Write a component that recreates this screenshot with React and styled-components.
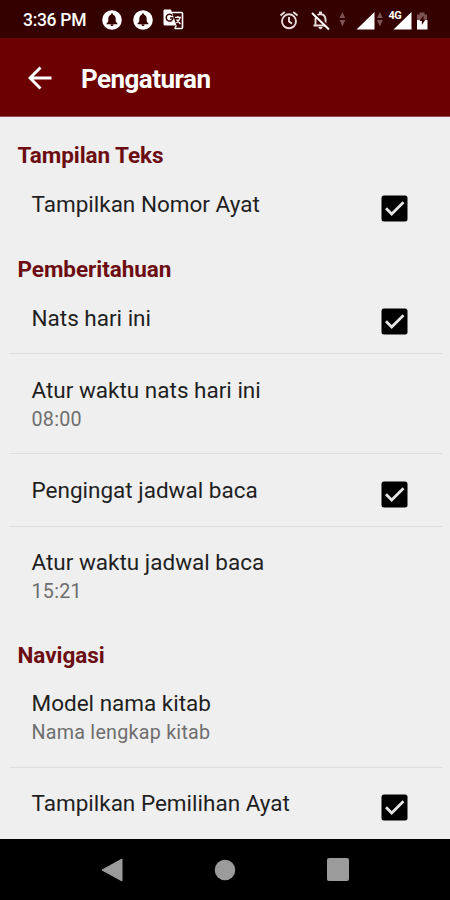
import React from 'react';
import styled, { createGlobalStyle } from 'styled-components';

const GlobalStyle = createGlobalStyle`
    * {
        box-sizing: border-box;
    }

    body {
        margin: 0;
        background-color: #efefef;
        font-family: Roboto, "Liberation Sans", sans-serif;
    }
`;

const Screen = styled.div`
    display: flex;
    flex-direction: column;
    width: 450px;
    height: 900px;
    overflow: hidden;
    background-color: #efefef;
`;

const StatusBar = styled.div`
    display: flex;
    align-items: center;
    flex: none;
    height: 38px;
    padding: 1px 22px 0 23px;
    background-color: #350000;
    color: #fff;
`;

const Clock = styled.span`
    width: 79px;
    font-size: 17.5px;
    font-weight: 500;
    letter-spacing: -0.3px;
    white-space: nowrap;
`;

const Notifications = styled.div`
    display: flex;
    align-items: center;
    gap: 10.5px;
`;

const SystemIcons = styled.svg`
    display: block;
    margin-left: auto;
`;

const Header = styled.header`
    display: flex;
    align-items: center;
    flex: none;
    height: 79px;
    padding: 1px 0 0 28px;
    border-bottom: 1px solid #8f4a4a;
    background-color: #6c0000;
`;

const Title = styled.h1`
    margin: 2px 0 0 29px;
    font-size: 26px;
    font-weight: 700;
    letter-spacing: -0.55px;
    color: #fff;
`;

const List = styled.main`
    flex: 1;
    min-height: 0;
    overflow: hidden;
    padding-top: 10.4px;
`;

const SectionTitle = styled.h2`
    height: 41px;
    margin: 0;
    padding: 15px 17.5px 0;
    font-size: 22.5px;
    font-weight: 700;
    line-height: 26px;
    letter-spacing: -0.05px;
    color: #6c0d12;
`;

const Row = styled.div`
    display: flex;
    align-items: center;
    justify-content: space-between;
    height: ${(props) => (props.$tall ? 99.9 : 72.5)}px;
    margin: 0 8px 0 9px;
    padding: 0 34.5px 0 22.5px;
    border-bottom: 1px solid ${(props) => (props.$last ? 'transparent' : '#dedede')};
`;

const Label = styled.div`
    font-size: 22.5px;
    line-height: 28px;
    color: #1f1f1f;
`;

const Summary = styled.div`
    padding-top: 1px;
    font-size: 19.7px;
    line-height: 29px;
    letter-spacing: 0.25px;
    color: #6e6e6e;
`;

const Texts = styled.div`
    padding-top: ${(props) => (props.$tall ? 1.6 : 0)}px;
`;

const CheckBox = styled.svg`
    display: block;
    margin-top: 8px;
`;

const NavBar = styled.nav`
    display: flex;
    justify-content: center;
    align-items: center;
    gap: 91px;
    flex: none;
    height: 61px;
    background-color: #000;
`;

const sections = [
    {
        title: 'Tampilan Teks',
        rows: [{ label: 'Tampilkan Nomor Ayat', checked: true }],
    },
    {
        title: 'Pemberitahuan',
        rows: [
            { label: 'Nats hari ini', checked: true },
            { label: 'Atur waktu nats hari ini', summary: '08:00' },
            { label: 'Pengingat jadwal baca', checked: true },
            { label: 'Atur waktu jadwal baca', summary: '15:21' },
        ],
    },
    {
        title: 'Navigasi',
        rows: [
            { label: 'Model nama kitab', summary: 'Nama lengkap kitab' },
            { label: 'Tampilkan Pemilihan Ayat', checked: true },
        ],
    },
];

function BellBadge() {
    return (
        <svg width="20" height="20" viewBox="0 0 20 20">
            <circle cx="10" cy="10" r="9.8" fill="#fff" />
            <path d="M10 3.500c-.8 0-1.200.5-1.200 1.200C6.900 5.400 6.300 7 6.300 9v2.600L4.600 13.400v.9h10.800v-.9l-1.700-1.800V9c0-2-.6-3.600-2.500-4.300 0-.7-.4-1.200-1.200-1.200zM8.500 14.500h3c0 1-.6 1.500-1.500 1.500s-1.500-.5-1.500-1.500z" fill="#350000" />
        </svg>
    );
}

function TranslateIcon() {
    return (
        <svg width="21" height="21" viewBox="0 0 21 21">
            <path d="M9 3.500h9.500a1 1 0 0 1 1 1V18.500a1 1 0 0 1-1 1H12" fill="none" stroke="#fff" strokeWidth="1.600" />
            <path d="M1.500.5H8L13.500 16.500H2a1.500 1.500 0 0 1-1.500-1.500V1.500a1 1 0 0 1 1-1z" fill="#fff" />
            <path d="M9.300 6.600A3.400 3.400 0 1 0 10 9H7" fill="none" stroke="#350000" strokeWidth="1.500" />
            <path d="M12 8.300h6M14.800 7v1.300M17 8.500c-.6 2.500-2 4-3.500 5.500M13.500 10.500l4 4.500M11.500 19.500l2-3" fill="none" stroke="#fff" strokeWidth="1.300" />
        </svg>
    );
}

function StatusIcons() {
    return (
        <SystemIcons width="150" height="24" viewBox="278 7 150 24">
            <g fill="none" stroke="#e8dcdc" strokeWidth="1.900">
                <circle cx="289" cy="20.300" r="7" />
                <path d="M289 16v4.600l3 2M280.500 14.500l4.200-3.500M297.500 14.500l-4.200-3.500" />
                <path d="M313.500 24.500h14.500M315.500 24.500v-6c0-3 1.800-5.100 5-5.500 3.200.4 5 2.500 5 5.500v6" />
                <path d="M313.500 11.500l17 16" stroke="#350000" strokeWidth="2" />
                <path d="M312 12l17 16.500" stroke="#fff" strokeWidth="2" />
            </g>
            <path d="M319 10.500h3v2.500h-3zM318.500 26h4c0 1.300-.8 2.200-2 2.200s-2-.9-2-2.200z" fill="#e8dcdc" />
            <path d="M339.500 17l2.900-6 2.900 6zM339.500 19h5.800l-2.900 6.500zM377 17l2.900-6 2.900 6zM377 19h5.800l-2.900 6.500z" fill="#7d5353" />
            <path d="M374.500 11v17.500H356.500zM411.500 11v17.500H393.500z" fill="#fff" />
            <text x="388.500" y="18" fontSize="11" fontWeight="700" fill="#fff" stroke="#350000" strokeWidth="1.500" paintOrder="stroke" letterSpacing="-0.5">4G</text>
            <path d="M417 19v-5.500h2.500V11.500h5v2h2.500V19z" fill="#7d5353" />
            <path d="M417 19h10.500v9.500H417z" fill="#fff" />
            <path d="M423.500 14.500l-4 5.500h2.400v4l3.600-5.500h-2z" fill="#350000" />
        </SystemIcons>
    );
}

function SettingRow({ row, last }) {
    return (
        <Row $tall={!!row.summary} $last={last}>
            <Texts $tall={!!row.summary}>
                <Label>{row.label}</Label>
                {row.summary && <Summary>{row.summary}</Summary>}
            </Texts>
            {row.checked && (
                <CheckBox width="27" height="27" viewBox="0 0 27 27">
                    <rect x="0.500" y="0.500" width="26" height="26" rx="2.500" fill="#000" />
                    <path d="M5 13.200l5.700 5.800L22.500 7.300" fill="none" stroke="#e4e4e4" strokeWidth="2.700" />
                </CheckBox>
            )}
        </Row>
    );
}

function App() {
    return (
        <>
            <GlobalStyle />
            <Screen>
                <StatusBar>
                    <Clock>3:36 PM</Clock>
                    <Notifications>
                        <BellBadge />
                        <BellBadge />
                        <TranslateIcon />
                    </Notifications>
                    <StatusIcons />
                </StatusBar>
                <Header>
                    <svg width="24" height="24" viewBox="0 0 24 24">
                        <path d="M23.500 12H2.500M12.500 1.500L2 12l10.500 10.500" fill="none" stroke="#fff" strokeWidth="2.900" />
                    </svg>
                    <Title>Pengaturan</Title>
                </Header>
                <List>
                    {sections.map((section) => (
                        <section key={section.title}>
                            <SectionTitle>{section.title}</SectionTitle>
                            {section.rows.map((row, index) => (
                                <SettingRow key={row.label} row={row} last={index === section.rows.length - 1} />
                            ))}
                        </section>
                    ))}
                </List>
                <NavBar>
                    <svg width="22" height="24" viewBox="0 0 22 24">
                        <path d="M21 1v22L1 12z" fill="#9b9b9b" stroke="#9b9b9b" strokeLinejoin="round" />
                    </svg>
                    <svg width="22" height="22" viewBox="0 0 22 22">
                        <circle cx="11" cy="11" r="10.300" fill="#9b9b9b" />
                    </svg>
                    <svg width="22" height="23" viewBox="0 0 22 23">
                        <rect width="22" height="23" rx="2" fill="#9b9b9b" />
                    </svg>
                </NavBar>
            </Screen>
        </>
    );
}

export default App;
